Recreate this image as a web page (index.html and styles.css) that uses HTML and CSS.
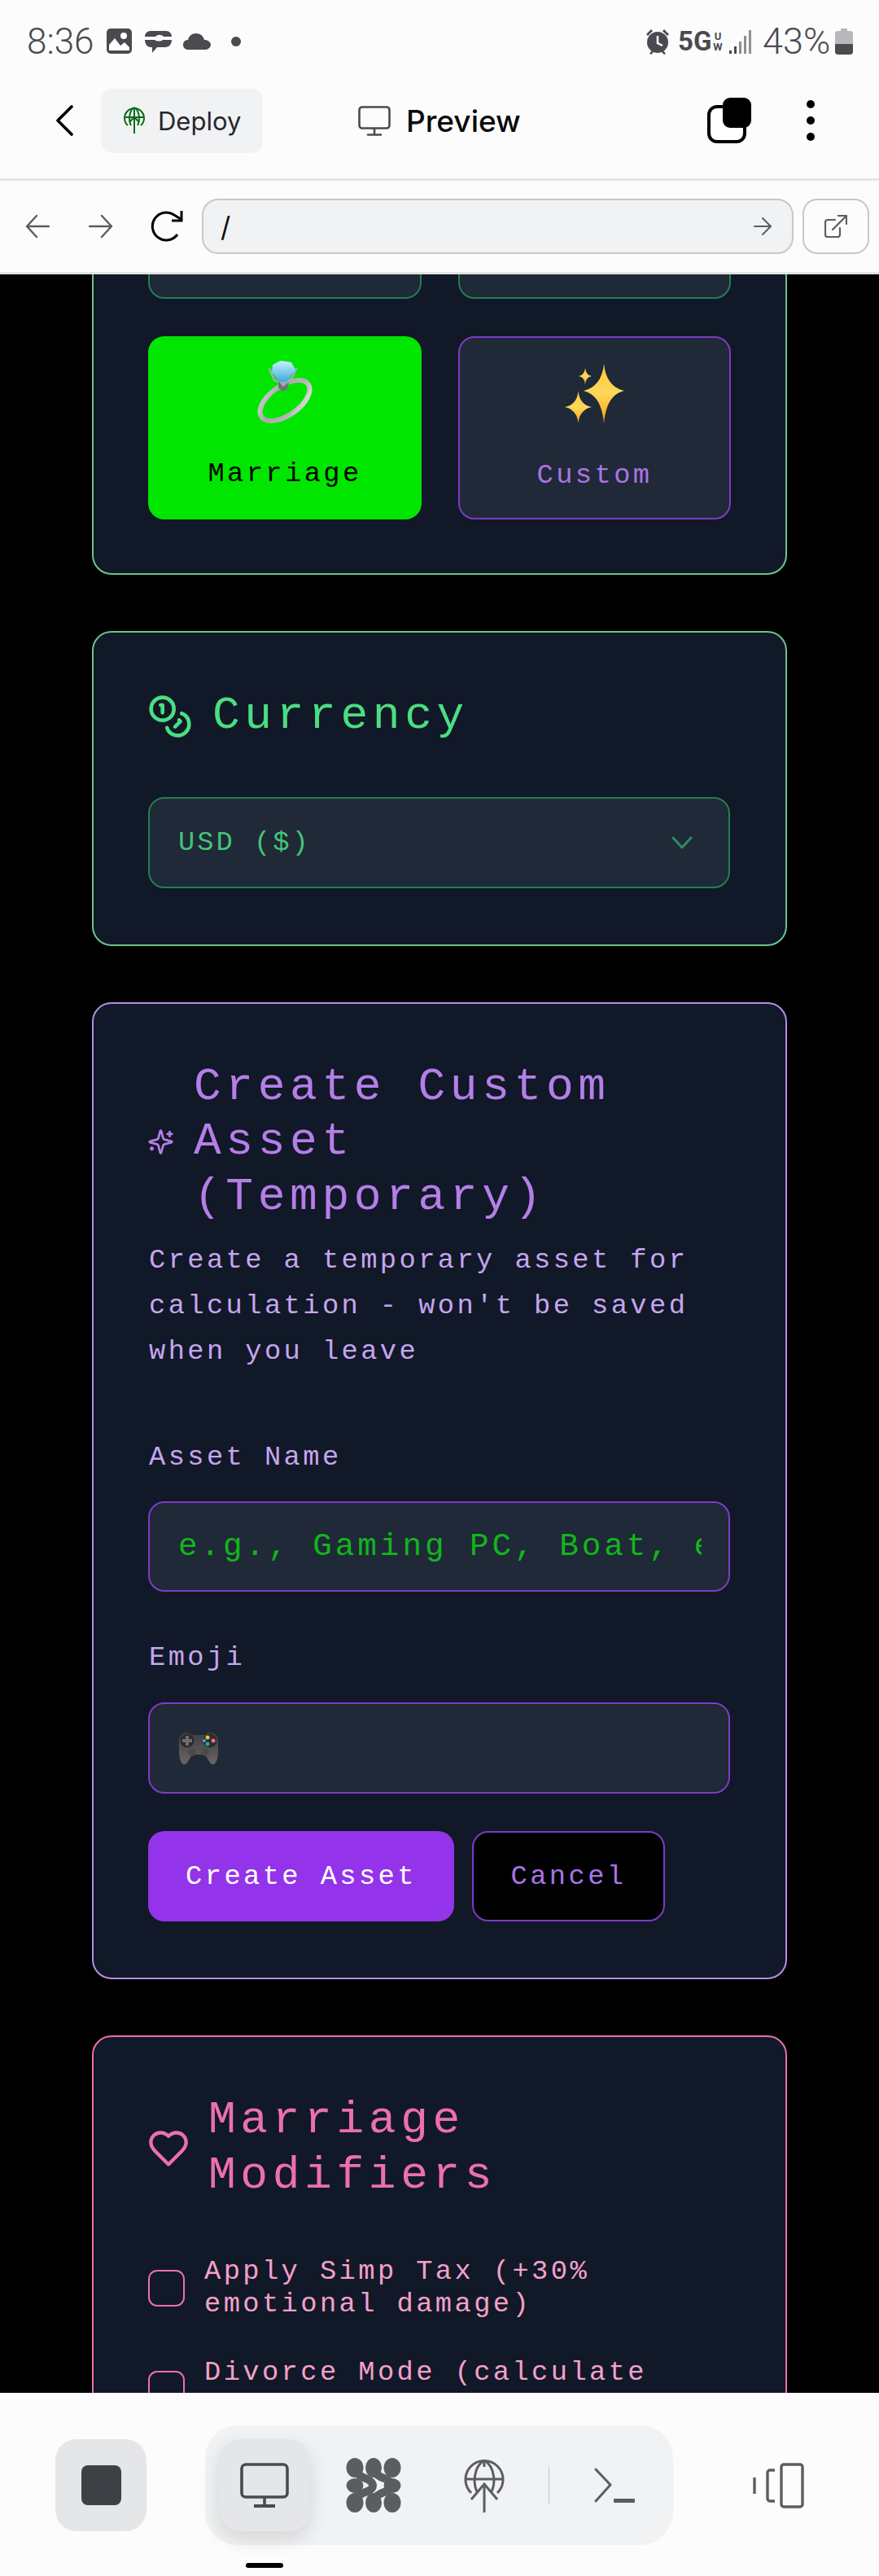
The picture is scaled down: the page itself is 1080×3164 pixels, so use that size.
FILE: index.html
```html
<!DOCTYPE html>
<html lang="en">
<head>
<meta charset="utf-8">
<title>Preview</title>
<link rel="stylesheet" href="styles.css">
</head>
<body>
<div class="status">
  <span class="clock">8:36</span>
  <svg class="st-img" viewBox="0 0 31 31"><rect width="31" height="31" rx="5" fill="#4a4b50"/><circle cx="21" cy="9" r="4" fill="#fff"/><path d="M3 27V20l7-8 7 9 5-4 6 6v4z" fill="#fff"/></svg>
  <svg class="st-msg" viewBox="0 0 36 32"><path d="M9 3h19c4 0 7 3 7 7H25c-3-3-7-3-10 0H2c0-4 3-7 7-7zM2 14h12c3 2 7 2 10 0h11c0 5-3 9-8 9H17l-6 7v-7H9c-4 0-7-4-7-9z" fill="#4a4b50"/></svg>
  <svg class="st-cloud" viewBox="0 0 36 21"><path d="M8 21c-4 0-7-2-7-6s3-6 6-6c1-5 5-8 10-8 6 0 9 4 10 8 5 0 8 3 8 6s-3 6-7 6z" fill="#4a4b50"/></svg>
  <span class="st-dot"></span>
  <span class="st-fill"></span>
  <svg class="st-alarm" viewBox="0 0 30 32"><path d="M1 7l6-6 2 2-6 6zM29 7l-6-6-2 2 6 6zM5 31l3-4 2 2-3 3zM25 31l-3-4-2 2 3 3z" fill="#4a4b50"/><circle cx="15" cy="17" r="13" fill="#4a4b50"/><path d="M15 9v9l6 3" stroke="#fff" stroke-width="2.5" fill="none"/></svg>
  <span class="st-5g">5G</span>
  <span class="st-uw">U<br>W</span>
  <svg class="st-signal" viewBox="0 0 27 30"><g fill="#4a4b50"><rect x="0" y="26" width="3" height="4"/><rect x="6" y="21" width="3" height="9"/></g><g fill="#8d8e92"><rect x="12" y="15" width="3" height="15"/><rect x="18" y="8" width="3" height="22"/><rect x="24" y="1" width="3" height="29"/></g></svg>
  <span class="st-pct">43%</span>
  <svg class="st-batt" viewBox="0 0 22 32"><path d="M7 0h8v3h3a4 4 0 0 1 4 4v8H0V7a4 4 0 0 1 4-4h3z" fill="#b8b8ba"/><path d="M0 13h22v15a4 4 0 0 1-4 4H4a4 4 0 0 1-4-4z" fill="#b8b8ba"/><path d="M0 19h22v9a4 4 0 0 1-4 4H4a4 4 0 0 1-4-4z" fill="#4a4b50"/></svg>
</div>

<header class="topbar">
  <svg class="back" viewBox="0 0 22 38"><path d="M20 2L3 19l17 17" fill="none" stroke="#000" stroke-width="3.6" stroke-linecap="round" stroke-linejoin="round"/></svg>
  <div class="deploy">
    <svg class="deploy-ico" viewBox="0 0 26 34"><g fill="none" stroke="#0f6b1a" stroke-width="2"><path d="M5 23A12 12 0 1 1 21 23"/><path d="M13 1C6 5 6 18 9 23M13 1C20 5 20 18 17 23"/><path d="M1 13h24M13 1v32M7 19l6-6 6 6"/></g></svg>
    <span>Deploy</span>
  </div>
  <div class="title">
    <svg class="title-ico" viewBox="0 0 40 37"><g fill="none" stroke="#4a4b50" stroke-width="2.6" stroke-linecap="round"><rect x="1.5" y="1.5" width="37" height="26" rx="3.5"/><path d="M20 28v7M12 35.500h16"/></g></svg>
    <span>Preview</span>
  </div>
  <svg class="tabs" viewBox="0 0 54 56"><rect x="2" y="11" width="44" height="43" rx="10" fill="#fff" stroke="#000" stroke-width="4"/><rect x="19" y="0" width="35" height="37" rx="9" fill="#000"/></svg>
  <svg class="dots" viewBox="0 0 10 50"><circle cx="5" cy="5" r="5"/><circle cx="5" cy="25" r="5"/><circle cx="5" cy="45" r="5"/></svg>
</header>

<div class="urlbar">
  <svg class="nav-a" viewBox="0 0 30 30"><path d="M29 15H3M14 2L2 15l12 13" fill="none" stroke="#5a5c61" stroke-width="2.4" stroke-linecap="round" stroke-linejoin="round"/></svg>
  <svg class="nav-b" viewBox="0 0 30 30"><path d="M1 15h26M16 2l12 13-12 13" fill="none" stroke="#5a5c61" stroke-width="2.4" stroke-linecap="round" stroke-linejoin="round"/></svg>
  <svg class="reload" viewBox="0 0 42 38"><path d="M34 29A17 17 0 1 1 30 5l8 5" fill="none" stroke="#000" stroke-width="3"/><path d="M39 0v12H27" fill="none" stroke="#000" stroke-width="3"/></svg>
  <div class="url"><span class="url-text">/</span>
    <svg class="url-go" viewBox="0 0 22 24"><path d="M1 12h19M11 2l10 10-10 10" fill="none" stroke="#5a5c61" stroke-width="2" stroke-linecap="round" stroke-linejoin="round"/></svg>
  </div>
  <div class="open">
    <svg class="open-ico" viewBox="0 0 28 28"><path d="M13 6H4a3 3 0 0 0-3 3v15a3 3 0 0 0 3 3h12a3 3 0 0 0 3-3v-8M10 18L27 1M17 1h10v10" fill="none" stroke="#5a5c61" stroke-width="2.2" stroke-linecap="round"/></svg>
  </div>
</div>

<main class="scroller">
  <section class="card card-green card-assets">
    <div class="tiles">
      <div class="tile tile-plain"></div>
      <div class="tile tile-plain"></div>
      <div class="tile tile-active">
        <svg class="tile-emoji" viewBox="0 0 68 77">
          <defs>
            <linearGradient id="band" x1="0" y1="0" x2="1" y2="1"><stop offset="0" stop-color="#d2d2d2"/><stop offset=".35" stop-color="#a8a8a8"/><stop offset=".7" stop-color="#b8b8b8"/><stop offset="1" stop-color="#ededed"/></linearGradient>
            <linearGradient id="gem" x1="0" y1="0" x2="0" y2="1"><stop offset="0" stop-color="#c8f1ff"/><stop offset="1" stop-color="#3fa9de"/></linearGradient>
          </defs>
          <ellipse cx="34" cy="49" rx="35" ry="18" transform="rotate(-35 34 49)" fill="none" stroke="url(#band)" stroke-width="6"/>
          <path d="M15 10l6 14 12 5 10-8 5-11" fill="none" stroke="#9fb0b6" stroke-width="2.500" stroke-linecap="round"/>
          <path d="M19 5l10-5 13 2 5 9-11 15h-9L18 14z" fill="url(#gem)"/>
          <path d="M26 25l6 7 7-6-2 9-6 3-5-5z" fill="#6d7478"/>
        </svg>
        <span class="tile-label">Marriage</span>
      </div>
      <div class="tile tile-custom">
        <svg class="tile-emoji" viewBox="0 0 73 73">
          <defs><linearGradient id="gold" x1="0" y1="0" x2="0" y2="1"><stop offset="0" stop-color="#ffc93c"/><stop offset=".5" stop-color="#ffd75a"/><stop offset="1" stop-color="#ff9f0a"/></linearGradient></defs>
          <path d="M48 0Q51 28 73 33Q51 38 48 73Q45 38 23 33Q45 28 48 0z" fill="url(#gold)"/>
          <path d="M16.500 33Q18 50 33 53Q18 56 16.500 73Q15 56 0 53Q15 50 16.500 33z" fill="url(#gold)"/>
          <path d="M25 5Q26 14 33 15Q26 16 25 25Q24 16 17 15Q24 14 25 5z" fill="url(#gold)"/>
        </svg>
        <span class="tile-label">Custom</span>
      </div>
    </div>
  </section>

  <section class="card card-green card-currency">
    <h2 class="heading head-green">
      <svg class="head-ico" viewBox="0 0 24 24"><g fill="none" stroke="currentColor" stroke-width="2" stroke-linecap="round" stroke-linejoin="round"><circle cx="8" cy="8" r="6"/><path d="M18.090 10.370A6 6 0 1 1 10.340 18"/><path d="M7 6h1v4"/><path d="m16.710 13.880.7.71-2.820 2.820"/></g></svg>
      <span>Currency</span>
    </h2>
    <div class="select">
      <span>USD ($)</span>
      <svg class="chev" viewBox="0 0 26 16"><path d="M2 2l11 12L24 2" fill="none" stroke="#2f8a5f" stroke-width="3" stroke-linecap="round" stroke-linejoin="round"/></svg>
    </div>
  </section>

  <section class="card card-purple">
    <h2 class="heading head-purple">
      <svg class="head-ico head-ico-small" viewBox="0 0 24 24"><g fill="none" stroke="currentColor" stroke-width="2" stroke-linecap="round" stroke-linejoin="round"><path d="M9.937 15.500A2 2 0 0 0 8.500 14.063l-6.135-1.582a.5.5 0 0 1 0-.962L8.500 9.936A2 2 0 0 0 9.937 8.500l1.582-6.135a.5.5 0 0 1 .963 0L14.063 8.500A2 2 0 0 0 15.500 9.937l6.135 1.581a.5.5 0 0 1 0 .964L15.500 14.063a2 2 0 0 0-1.437 1.437l-1.582 6.135a.5.5 0 0 1-.963 0z"/><path d="M20 3v4M22 5h-4M4 17v2M5 18H3"/></g></svg>
      <span>Create Custom Asset (Temporary)</span>
    </h2>
    <p class="sub">Create a temporary asset for calculation - won't be saved when you leave</p>
    <label class="label label-first" for="asset-name">Asset Name</label>
    <input class="field" id="asset-name" type="text" placeholder="e.g., Gaming PC, Boat, etc.">
    <div class="label label-second">Emoji</div>
    <div class="field field-emoji">
      <svg class="pad" viewBox="0 0 50 41">
        <defs><linearGradient id="padg" x1="0" y1="0" x2="0" y2="1"><stop offset="0" stop-color="#3e3e40"/><stop offset="1" stop-color="#6a6466"/></linearGradient></defs>
        <path d="M10 1c4 0 6 2 8 3h14c2-1 4-3 8-3 6 0 9 5 9 11 0 10 1 19-3 26-2 3-5 3-7 0l-5-8c-2-2-4-2-6-2h-6c-2 0-4 0-6 2l-5 8c-2 3-5 3-7 0C0 31 1 22 1 12 1 6 4 1 10 1z" fill="url(#padg)"/>
        <circle cx="11" cy="11" r="8.500" fill="#2c2c2e"/><path d="M9 5h4v4h4v4h-4v4H9v-4H5V9h4z" fill="#6e6e70"/>
        <circle cx="39" cy="11" r="8.500" fill="#2c2c2e"/>
        <circle cx="36" cy="7" r="2.500" fill="#f7c12d"/><circle cx="43" cy="11" r="2.500" fill="#ef6f86"/><circle cx="36" cy="15" r="2.500" fill="#22a98e"/><circle cx="32" cy="11" r="2" fill="#3ea5d6"/>
        <circle cx="17" cy="25" r="5" fill="#4c4a4b"/><circle cx="33" cy="25" r="5" fill="#4c4a4b"/>
      </svg>
    </div>
    <div class="actions">
      <button class="btn btn-create" type="button">Create Asset</button>
      <button class="btn btn-cancel" type="button">Cancel</button>
    </div>
  </section>

  <section class="card card-pink">
    <h2 class="heading head-pink">
      <svg class="head-ico head-ico-heart" viewBox="0 0 24 24"><path d="M19 14c1.490-1.460 3-3.210 3-5.500A5.500 5.500 0 0 0 16.500 3c-1.760 0-3 .5-4.500 2-1.500-1.500-2.740-2-4.500-2A5.500 5.500 0 0 0 2 8.500c0 2.300 1.500 4.050 3 5.500l7 7z" fill="none" stroke="currentColor" stroke-width="2" stroke-linecap="round" stroke-linejoin="round"/></svg>
      <span>Marriage Modifiers</span>
    </h2>
    <div class="checks">
      <div class="check"><span class="box"></span><span class="check-text">Apply Simp Tax (+30% emotional damage)</span></div>
      <div class="check"><span class="box"></span><span class="check-text">Divorce Mode (calculate post-divorce net worth)</span></div>
    </div>
  </section>
</main>

<nav class="dock">
  <div class="stop"><span class="stop-sq"></span></div>
  <div class="dock-group">
    <div class="dock-active">
      <svg class="d-mon" viewBox="0 0 60 56"><g fill="none" stroke="#4a4b50" stroke-width="3.600"><rect x="2" y="2" width="56" height="40" rx="5"/><path d="M30 42v11"/><path d="M17 53h26" stroke-width="4"/></g></svg>
    </div>
    <svg class="d-weave" viewBox="0 0 68 67"><g fill="#5b5d63"><ellipse cx="11" cy="12" rx="10.500" ry="12"/><ellipse cx="34" cy="12" rx="10" ry="12"/><ellipse cx="57" cy="12" rx="10.500" ry="12"/><ellipse cx="11" cy="34" rx="10.500" ry="9"/><ellipse cx="57" cy="34" rx="10.500" ry="9"/><ellipse cx="11" cy="55" rx="10.500" ry="12"/><ellipse cx="34" cy="55" rx="10" ry="12"/><ellipse cx="57" cy="55" rx="10.500" ry="12"/></g><g fill="none" stroke="#5b5d63" stroke-width="10"><path d="M12 16Q15 22 24 25Q33 29 33 34Q33 39 24 42Q15 45 12 51"/><path d="M35 16Q38 22 47 25Q56 29 56 34Q56 39 47 42Q38 45 35 51"/></g></svg>
    <svg class="d-globe" viewBox="0 0 50 66"><g fill="none" stroke="#5b5d63" stroke-width="3"><path d="M9 42A23 23 0 1 1 41 42"/><path d="M25 2C11 10 11 32 17 42M25 2C39 10 39 32 33 42"/><path d="M2 25h46M25 2v8M25 34v32M9 50l16-19 16 19"/></g></svg>
    <span class="d-div"></span>
    <svg class="d-term" viewBox="0 0 50 44"><path d="M2 2l18 19L2 41" fill="none" stroke="#5b5d63" stroke-width="3" stroke-linecap="round" stroke-linejoin="round"/><rect x="24" y="38" width="26" height="5" rx="1" fill="#5b5d63"/></svg>
  </div>
  <svg class="d-side" viewBox="0 0 63 56"><g fill="none" stroke="#5b5d63" stroke-width="3.400"><rect x="35" y="2" width="26" height="52" rx="3"/><path d="M27 9h-6a3 3 0 0 0-3 3v32a3 3 0 0 0 3 3h6"/><path d="M2 18v20"/></g></svg>
  <span class="home-bar"></span>
</nav>
</body>
</html>
```
FILE: styles.css
```css
* { box-sizing: border-box; }
html, body { margin: 0; padding: 0; }
body {
  width: 1080px;
  height: 3164px;
  overflow: hidden;
  display: flex;
  flex-direction: column;
  background: #fcfcfc;
  font-family: "Liberation Mono", monospace;
}
svg { display: block; flex: none; }

/* status bar */
.status {
  height: 77px;
  flex: none;
  display: flex;
  align-items: center;
  padding: 24px 32px 0 33px;
  font-family: Roboto, sans-serif;
  color: #4a4b50;
}
.clock { font-size: 44px; width: 98px; font-weight: 300; }
.st-img { width: 31px; height: 31px; }
.st-msg { width: 36px; height: 32px; margin-left: 14px; }
.st-cloud { width: 36px; height: 21px; margin-left: 12px; }
.st-dot { width: 12px; height: 12px; border-radius: 50%; background: #4a4b50; margin-left: 24px; }
.st-fill { flex: 1; }
.st-alarm { width: 30px; height: 32px; }
.st-5g { font-size: 33px; font-weight: 700; margin-left: 10px; width: 40px; }
.st-uw { font-size: 13px; font-weight: 700; line-height: 13px; margin-left: 1px; width: 16px; text-align: center; }
.st-signal { width: 27px; height: 30px; margin-left: 6px; }
.st-pct { font-size: 45px; font-weight: 300; margin-left: 14px; width: 89px; white-space: nowrap; }
.st-batt { width: 22px; height: 32px; }

/* top bar */
.topbar {
  height: 145px;
  flex: none;
  display: flex;
  align-items: center;
  padding: 0 0 0 68px;
  border-bottom: 3px solid #e4e4e4;
}
.back { width: 22px; height: 38px; }
.deploy {
  margin-left: 34px;
  width: 199px;
  height: 79px;
  border-radius: 14px;
  background: #f1f2f4;
  display: flex;
  align-items: center;
  padding-left: 28px;
  gap: 16px;
  font-family: Inter, sans-serif;
  font-size: 31px;
  color: #26272b;
}
.deploy-ico { width: 26px; height: 34px; }
.title {
  margin-left: 117px;
  width: 429px;
  display: flex;
  align-items: center;
  gap: 19px;
  font-family: Inter, sans-serif;
  font-size: 37px;
  font-weight: 500;
  color: #0a0a0a;
}
.title-ico { width: 40px; height: 37px; }
.tabs { width: 54px; height: 56px; }
.dots { width: 10px; height: 50px; margin-left: 68px; }

/* url bar */
.urlbar {
  height: 115px;
  flex: none;
  display: flex;
  align-items: center;
  padding-left: 31px;
  border-bottom: 3px solid #e4e4e4;
}
.nav-a, .nav-b { width: 30px; height: 30px; }
.nav-b { margin-left: 48px; }
.reload { width: 42px; height: 38px; margin-left: 45px; }
.url {
  margin-left: 22px;
  width: 727px;
  height: 68px;
  border: 2.500px solid #c6c8cb;
  border-radius: 20px;
  background: #f1f2f4;
  display: flex;
  align-items: center;
  justify-content: space-between;
  padding: 0 25px 0 21px;
  font-family: Inter, sans-serif;
  font-size: 34px;
  color: #111;
}
.url-go { width: 22px; height: 24px; }
.open {
  margin-left: 11px;
  width: 82px;
  height: 68px;
  border: 2.500px solid #c6c8cb;
  border-radius: 18px;
  display: flex;
  align-items: center;
  justify-content: center;
  background: #fcfcfc;
}
.open-ico { width: 28px; height: 28px; }

/* scrolling preview */
.scroller {
  flex: 1;
  min-height: 0;
  overflow: hidden;
  background: #000;
  padding: 0 113px;
  display: flex;
  flex-direction: column;
  gap: 69px;
}
.card {
  flex: none;
  background: #111827;
  border: 2px solid;
  border-radius: 24px;
  padding: 66px 68px;
}
.card-green { border-color: #6cc48d; }
.card-currency { padding-bottom: 69px; }
.card-purple { border-color: #b68ce8; padding-bottom: 69px; }
.card-pink { border-color: #ec6fae; }
.card-assets { margin-top: -263px; padding-top: 66px; }

.tiles {
  display: grid;
  grid-template-columns: 336px 335px;
  column-gap: 45px;
  row-gap: 46px;
  grid-auto-rows: 225px;
  margin-left: -1px;
}
.tile {
  border-radius: 20px;
  display: flex;
  flex-direction: column;
  align-items: center;
  padding-top: 30px;
  font-size: 33.750px;
  letter-spacing: 3.400px;
  line-height: 47px;
}
.tile-plain { background: #1f2937; border: 2.500px solid #22804f; }
.tile-active { background: #00e600; color: #000; }
.tile-custom { background: #1f2937; border: 2.500px solid #7e3ac8; color: #a974e6; padding-top: 29.500px; }
.tile-emoji { width: 73px; height: 77px; }
.tile-active .tile-emoji { width: 68px; }
.tile-label { margin-top: 39px; }

.heading {
  margin: 0;
  display: flex;
  align-items: center;
  font-size: 56.250px;
  font-weight: 400;
  line-height: 67.500px;
  letter-spacing: 5.600px;
  padding-top: 3px;
}
.head-green { color: #4ade80; gap: 24px; margin-bottom: 65px; }
.head-purple { color: #b57ee8; gap: 24px; }
.head-pink { color: #ec6fae; gap: 23px; margin-bottom: 65px; }
.head-ico { width: 56px; height: 56px; margin-left: -2px; }
.head-ico-small { width: 33px; height: 33px; }
.head-ico-heart { width: 52px; height: 52px; }

.select {
  height: 112px;
  background: #1f2937;
  border: 2.500px solid #22804f;
  border-radius: 20px;
  margin-left: -1px;
  display: flex;
  align-items: center;
  justify-content: space-between;
  padding: 0 44px 0 35px;
  font-size: 33.750px;
  letter-spacing: 3px;
  color: #45c47a;
}
.chev { width: 26px; height: 16px; }

.sub {
  margin: 16px 0 0;
  font-size: 33.750px;
  line-height: 56px;
  letter-spacing: 3.400px;
  color: #c5a5ee;
}
.label {
  display: block;
  font-size: 33.750px;
  line-height: 48px;
  letter-spacing: 3.400px;
  color: #c5a5ee;
}
.label-first { margin: 78px 0 30px; }
.label-second { margin: 57px 0 31px; }
.field {
  display: block;
  width: 715px;
  height: 111px;
  margin-left: -1px;
  background: #1f2937;
  border: 2.500px solid #7e3ac8;
  border-radius: 20px;
  padding: 0 33px 0 35px;
  font-family: "Liberation Mono", monospace;
  font-size: 39.400px;
  letter-spacing: 3.900px;
  color: #fff;
  outline: none;
}
.field::placeholder { color: #12b51c; opacity: 1; }
.field-emoji { display: flex; align-items: center; height: 112px; }
.pad { width: 50px; height: 41px; }

.actions { display: flex; gap: 22px; margin: 46px 0 0 -1px; }
.btn {
  height: 111px;
  border-radius: 20px;
  font-family: "Liberation Mono", monospace;
  font-size: 33.750px;
  letter-spacing: 3.400px;
  padding: 0;
}
.btn-create { width: 376px; background: #9333ea; color: #fff; border: 0; }
.btn-cancel { width: 237px; background: #000; color: #a974e6; border: 2.500px solid #7e3ac8; }

.checks { display: flex; flex-direction: column; gap: 45px; }
.check { display: flex; align-items: center; gap: 24px; }
.box {
  flex: none;
  width: 45px;
  height: 45px;
  margin-left: -1px;
  border: 2.500px solid #ec6fae;
  border-radius: 11px;
}
.check-text {
  font-size: 33.750px;
  line-height: 39.500px;
  letter-spacing: 3.400px;
  color: #f3a0cb;
}

/* bottom dock */
.dock {
  flex: none;
  height: 225px;
  position: relative;
  display: flex;
  align-items: flex-start;
  padding: 40px 0 0 68px;
  background: #fcfcfc;
}
.stop {
  width: 112px;
  height: 113px;
  margin-top: 17px;
  border-radius: 26px;
  background: #e5e6e8;
  display: flex;
  align-items: center;
  justify-content: center;
}
.stop-sq { width: 49px; height: 49px; border-radius: 8px; background: #3f4046; }
.dock-group {
  margin-left: 72px;
  width: 575px;
  height: 147px;
  border-radius: 40px;
  background: #f1f2f4;
  display: flex;
  align-items: center;
  padding-left: 17px;
}
.dock-active {
  width: 112px;
  height: 113px;
  border-radius: 26px;
  background: #e5e6e8;
  box-shadow: 0 10px 24px rgba(0, 0, 0, .12);
  display: flex;
  align-items: center;
  justify-content: center;
}
.d-mon { width: 60px; height: 56px; }
.d-weave { width: 68px; height: 67px; margin-left: 44px; }
.d-globe { width: 50px; height: 66px; margin-left: 77px; }
.d-div { width: 1px; height: 46px; background: #c4c5c8; margin-left: 54px; }
.d-term { width: 50px; height: 44px; margin-left: 55px; }
.d-side { width: 63px; height: 56px; margin: 46px 0 0 98px; }
.home-bar {
  position: absolute;
  left: 302px;
  top: 209px;
  width: 46px;
  height: 6px;
  border-radius: 3px;
  background: #000;
}
```
